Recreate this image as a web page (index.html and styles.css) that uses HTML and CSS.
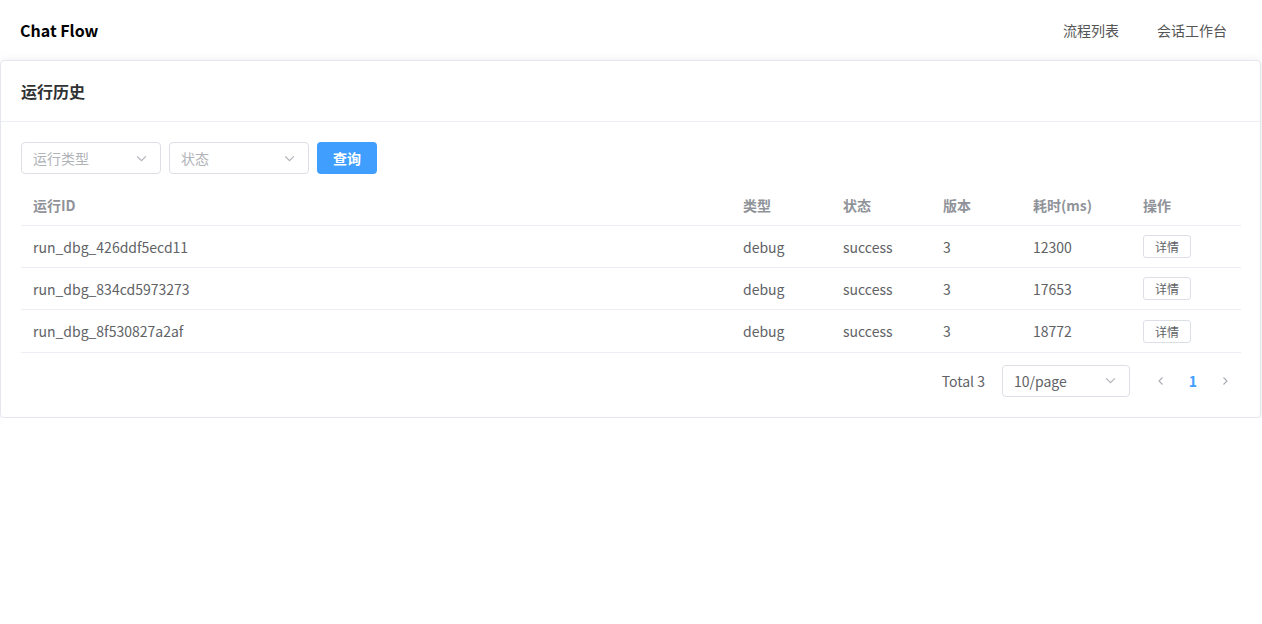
FILE: index.html
```html
<!DOCTYPE html>
<html lang="zh-CN">
  <head>
    <meta charset="UTF-8" />
    <meta name="viewport" content="width=device-width, initial-scale=1.0" />
    <title>Chat Flow</title>
    <link rel="stylesheet" href="styles.css">
  </head>
  <body>
    <!-- top bar -->
    <header class="topbar">
      <div class="brand">Chat Flow</div>
      <nav class="nav">
        <a class="nav-item">流程列表</a>
        <a class="nav-item">会话工作台</a>
      </nav>
    </header>

    <!-- run history card -->
    <div class="card">
      <div class="card-header">运行历史</div>
      <div class="card-body">
        <div class="filters">
          <div class="select">
            <span class="placeholder">运行类型</span>
            <svg class="caret" viewBox="0 0 12 12"><path d="M2 4l4 4 4-4" /></svg>
          </div>
          <div class="select">
            <span class="placeholder">状态</span>
            <svg class="caret" viewBox="0 0 12 12"><path d="M2 4l4 4 4-4" /></svg>
          </div>
          <button class="btn-primary">查询</button>
        </div>

        <table class="runs">
          <colgroup>
            <col />
            <col class="w100" />
            <col class="w100" />
            <col class="w90" />
            <col class="w110" />
            <col class="w110" />
          </colgroup>
          <thead>
            <tr>
              <th>运行ID</th>
              <th>类型</th>
              <th>状态</th>
              <th>版本</th>
              <th>耗时(ms)</th>
              <th>操作</th>
            </tr>
          </thead>
          <tbody>
            <tr>
              <td>run_dbg_426ddf5ecd11</td>
              <td>debug</td>
              <td>success</td>
              <td>3</td>
              <td>12300</td>
              <td><button class="btn-mini">详情</button></td>
            </tr>
            <tr>
              <td>run_dbg_834cd5973273</td>
              <td>debug</td>
              <td>success</td>
              <td>3</td>
              <td>17653</td>
              <td><button class="btn-mini">详情</button></td>
            </tr>
            <tr>
              <td>run_dbg_8f530827a2af</td>
              <td>debug</td>
              <td>success</td>
              <td>3</td>
              <td>18772</td>
              <td><button class="btn-mini">详情</button></td>
            </tr>
          </tbody>
        </table>

        <!-- pagination -->
        <div class="pagination">
          <span class="total">Total 3</span>
          <div class="select select-size">
            <span>10/page</span>
            <svg class="caret" viewBox="0 0 12 12"><path d="M2 4l4 4 4-4" /></svg>
          </div>
          <button class="pg-btn">
            <svg viewBox="0 0 12 12"><path d="M7.5 2.5L4 6l3.5 3.5" /></svg>
          </button>
          <span class="pg-num active">1</span>
          <button class="pg-btn">
            <svg viewBox="0 0 12 12"><path d="M4.5 2.5L8 6 4.5 9.5" /></svg>
          </button>
        </div>
      </div>
    </div>
  </body>
</html>
```

FILE: styles.css
```css
* {
  box-sizing: border-box;
}

body {
  margin: 0;
  font-family: "Noto Sans CJK SC", "Noto Sans", sans-serif;
  color: #303133;
  background: #fff;
}

.topbar {
  height: 60px;
  display: flex;
  align-items: center;
  justify-content: space-between;
  padding: 0 35px 0 20px;
}

.brand {
  font-size: 16px;
  font-weight: 700;
  color: #000;
}

.nav {
  display: flex;
  gap: 38px;
}

.nav-item {
  font-size: 14px;
  color: #555;
}

.card {
  border: 1px solid #e4e7ed;
  border-radius: 4px;
  box-shadow: 0 2px 12px rgba(0, 0, 0, 0.1);
  margin-right: 1px;
}

.card-header {
  height: 61px;
  padding: 0 20px;
  display: flex;
  align-items: center;
  border-bottom: 1px solid #ebeef5;
  font-size: 16px;
  font-weight: 700;
  color: #303133;
}

.card-body {
  padding: 20px 19px 20px 20px;
}

.filters {
  display: flex;
  gap: 8px;
  margin-bottom: 11px;
}

.select {
  width: 140px;
  height: 32px;
  border: 1px solid #dcdfe6;
  border-radius: 4px;
  display: flex;
  align-items: center;
  justify-content: space-between;
  padding: 0 12px 0 11px;
  font-size: 14px;
  color: #606266;
}

.placeholder {
  color: #b0b3b8;
}

.caret {
  width: 13px;
  height: 13px;
  fill: none;
  stroke: #b0b3b8;
  stroke-width: 1.1;
}

.btn-primary {
  width: 60px;
  height: 32px;
  border: none;
  border-radius: 4px;
  background: #409eff;
  color: #fff;
  font-family: inherit;
  font-size: 14px;
  font-weight: 700;
}

.runs {
  width: 100%;
  border-collapse: collapse;
  table-layout: fixed;
  font-size: 14px;
}

.w100 {
  width: 100px;
}

.w90 {
  width: 90px;
}

.w110 {
  width: 110px;
}

.runs th {
  text-align: left;
  font-weight: 700;
  color: #909399;
  height: 40px;
  padding: 0 12px;
  border-bottom: 1px solid #ebeef5;
}

.runs td {
  height: 42px;
  padding: 1px 12px 0;
  color: #606266;
  border-bottom: 1px solid #ebeef5;
}

.runs tr:last-child td {
  height: 43px;
}

.btn-mini {
  height: 23px;
  padding: 0 11px;
  border: 1px solid #dcdfe6;
  border-radius: 3px;
  background: #fff;
  font-family: inherit;
  font-size: 12px;
  color: #606266;
}

.pagination {
  display: flex;
  align-items: center;
  justify-content: flex-end;
  margin-top: 12px;
  padding-right: 1px;
  font-size: 14px;
  color: #606266;
}

.total {
  margin-right: 17px;
}

.select-size {
  width: 128px;
  margin-right: 16px;
}

.pg-btn {
  width: 30px;
  height: 28px;
  border: none;
  background: none;
  padding: 0;
  display: flex;
  align-items: center;
  justify-content: center;
}

.pg-btn svg {
  width: 12px;
  height: 12px;
  fill: none;
  stroke: #a8abb2;
  stroke-width: 1.1;
}

.pg-num {
  min-width: 34px;
  text-align: center;
  font-weight: 700;
}

.pg-num.active {
  color: #409eff;
}
```
